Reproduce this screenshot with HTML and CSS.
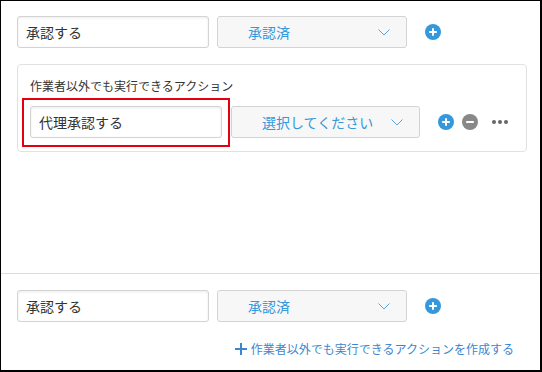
FILE: index.html
```html
<!DOCTYPE html>
<html lang="ja">
<head>
<meta charset="utf-8">
<link rel="stylesheet" href="styles.css">
</head>
<body>
<div class="frame">
  <div class="upper">
    <div class="row">
      <div class="input">承認する</div>
      <div class="select"><span>承認済</span><svg class="chev" viewBox="0 0 12 7"><path d="M0.5 0.5 L6 6 L11.5 0.5" fill="none" stroke="#5aa4dd" stroke-width="1"/></svg></div>
      <svg class="circ add" viewBox="0 0 16 16"><circle cx="8" cy="8" r="8" fill="#3498db"/><path d="M8 4.2v7.6M4.2 8h7.6" stroke="#fff" stroke-width="2"/></svg>
    </div>
    <div class="panel">
      <div class="panel-label">作業者以外でも実行できるアクション</div>
      <div class="row">
        <div class="highlight-wrap">
          <div class="input">代理承認する</div>
          <div class="highlight"></div>
        </div>
        <div class="select select-narrow"><span>選択してください</span><svg class="chev" viewBox="0 0 12 7"><path d="M0.5 0.5 L6 6 L11.5 0.5" fill="none" stroke="#5aa4dd" stroke-width="1"/></svg></div>
        <div class="actions">
          <svg class="circ" viewBox="0 0 16 16"><circle cx="8" cy="8" r="8" fill="#3498db"/><path d="M8 4.2v7.6M4.2 8h7.6" stroke="#fff" stroke-width="2"/></svg>
          <svg class="circ" viewBox="0 0 16 16"><circle cx="8" cy="8" r="8" fill="#888"/><path d="M4.2 8h7.6" stroke="#fff" stroke-width="2"/></svg>
          <div class="dots"><i></i><i></i><i></i></div>
        </div>
      </div>
    </div>
  </div>
  <div class="lower">
    <div class="row">
      <div class="input">承認する</div>
      <div class="select"><span>承認済</span><svg class="chev" viewBox="0 0 12 7"><path d="M0.5 0.5 L6 6 L11.5 0.5" fill="none" stroke="#5aa4dd" stroke-width="1"/></svg></div>
      <svg class="circ add" viewBox="0 0 16 16"><circle cx="8" cy="8" r="8" fill="#3498db"/><path d="M8 4.2v7.6M4.2 8h7.6" stroke="#fff" stroke-width="2"/></svg>
    </div>
    <div class="link-row">
      <a class="create-link"><svg class="plus" viewBox="0 0 12 12"><path d="M6 0v12M0 6h12" stroke="#3a87cf" stroke-width="2"/></svg>作業者以外でも実行できるアクションを作成する</a>
    </div>
  </div>
</div>
</body>
</html>
```
FILE: styles.css
```css
* { box-sizing: border-box; }
html, body { margin: 0; padding: 0; background: #fff; }
body {
  font-family: "Noto Sans CJK JP", "Noto Sans", sans-serif;
  color: #333;
}
.frame {
  width: 542px;
  height: 372px;
  border-top: 1px solid #000;
  border-left: 1px solid #000;
  border-right: 2px solid #000;
  border-bottom: 2px solid #000;
  display: flex;
  flex-direction: column;
}
.upper {
  flex: 1;
  padding: 15px 14px 0 16px;
}
.row {
  display: flex;
  align-items: center;
}
.input {
  width: 192px;
  height: 32px;
  border: 1px solid #d3d3d3;
  border-radius: 3px;
  background: #fff;
  box-shadow: inset 0 1px 3px rgba(0,0,0,0.08);
  padding-left: 8px;
  font-size: 14px;
  line-height: 30px;
  color: #333;
}
.select {
  width: 190px;
  height: 32px;
  margin-left: 8px;
  border: 1px solid #d3d3d3;
  border-radius: 3px;
  background: #f7f7f7;
  padding-left: 30px;
  padding-right: 16px;
  display: flex;
  align-items: center;
  justify-content: space-between;
  font-size: 14px;
  color: #3498db;
}
.select-narrow { width: 189px; margin-left: 9px; }
.chev { width: 12px; height: 7px; display: block; }
.circ { width: 16px; height: 16px; display: block; }
.add { margin-left: 18px; }
.panel {
  margin-top: 16px;
  width: 510px;
  border: 1px solid #e2e2e2;
  border-radius: 4px;
  padding: 12px 12px 13px 12px;
}
.panel-label {
  font-size: 12px;
  line-height: 18px;
  color: #333;
  margin-bottom: 11px;
}
.highlight-wrap { position: relative; }
.highlight {
  position: absolute;
  left: -8px;
  right: -8px;
  top: -8px;
  bottom: -9px;
  border: 2px solid #e3000f;
  pointer-events: none;
}
.actions {
  display: flex;
  align-items: center;
  margin-left: 18px;
  gap: 8px;
}
.dots {
  display: flex;
  gap: 2px;
  margin-left: 6px;
}
.dots i {
  width: 4px;
  height: 4px;
  border-radius: 50%;
  background: #666;
  display: block;
}
.lower {
  border-top: 1px solid #dcdcdc;
  padding: 16px 14px 12px 16px;
}
.link-row {
  margin-top: 18px;
  display: flex;
  justify-content: flex-end;
  padding-right: 12px;
}
.create-link {
  display: flex;
  align-items: center;
  font-size: 12px;
  line-height: 18px;
  color: #3a87cf;
  text-decoration: none;
}
.plus { width: 12px; height: 12px; margin-right: 4px; display: block; }
```
